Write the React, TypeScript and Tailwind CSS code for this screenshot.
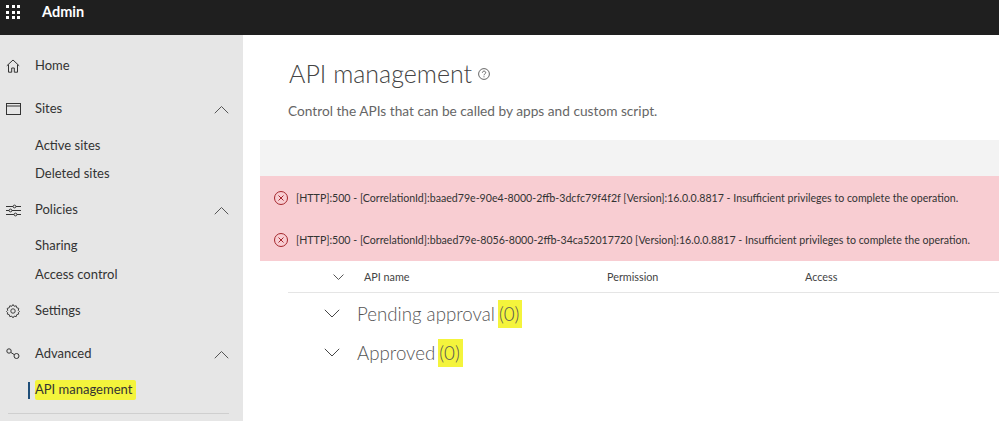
import React from "react";

const Chev = ({ up, size = 16, cls = "" }: { up?: boolean; size?: number; cls?: string }) => (
  <svg width={size} height={size * 0.6} viewBox="0 0 20 12" fill="none" stroke="currentColor" strokeWidth={20 / size} className={cls}>
    {up ? <path d="M1 11 10 2l9 9" /> : <path d="M1 1l9 9 9-9" />}
  </svg>
);

const stroke = { fill: "none", stroke: "currentColor", strokeWidth: 1 };

const HomeIcon = () => (
  <svg width="14" height="14" viewBox="0 0 14 14" {...stroke}>
    <path d="M.8 6.8 7 1l6.2 5.8M2.5 5.6v7.6h3.2V9h2.6v4.2h3.2V5.6" />
  </svg>
);
const SitesIcon = () => (
  <svg width="15" height="13" viewBox="0 0 15 13" {...stroke}>
    <rect x=".5" y=".5" width="14" height="11" />
    <path d="M.5 3h14" />
  </svg>
);
const PoliciesIcon = () => (
  <svg width="15" height="13" viewBox="0 0 15 13" {...stroke}>
    <path d="M0 2.5h7M10 2.5h5M0 6.5h3M6 6.5h9M0 10.5h8M11 10.5h4" />
    <circle cx="8.5" cy="2.5" r="1.4" />
    <circle cx="4.5" cy="6.5" r="1.4" />
    <circle cx="9.5" cy="10.5" r="1.4" />
  </svg>
);
const GearIcon = () => (
  <svg width="14" height="14" viewBox="0 0 24 24" fill="none" stroke="currentColor" strokeWidth="1.6">
    <path d="M12 1.5l2 3 3.5-.8 1 3.4 3.4 1-.8 3.5 2 2-2 2 .8 2.2-3.4 1-1 3.4-3.5-.8-2 3-2-3-3.5.8-1-3.4-3.4-1 .8-2.2-2-2 2-2-.8-3.5 3.4-1 1-3.4 3.5.8z" transform="translate(0 -.6)" />
    <circle cx="12" cy="12" r="3.8" />
  </svg>
);
const AdvancedIcon = () => (
  <svg width="14" height="12" viewBox="0 0 14 12" {...stroke}>
    <circle cx="3" cy="3" r="2.2" />
    <circle cx="10.5" cy="8" r="2.5" />
    <path d="M5 4.5 8 6.5" />
  </svg>
);
const ErrorIcon = () => (
  <svg width="14" height="14" viewBox="0 0 14 14" fill="none" stroke="#a4262c" strokeWidth="1" className="shrink-0">
    <circle cx="7" cy="7" r="6.5" />
    <path d="M4.5 4.5l5 5M9.5 4.5l-5 5" />
  </svg>
);

const Row = ({ icon, label, chevron, cls = "" }: { icon?: React.ReactNode; label: string; chevron?: boolean; cls?: string }) => (
  <div className={`flex h-7 items-center text-[13px] text-[#333333] ${cls}`}>
    <div className="flex w-[35px] justify-start pl-[6px]">{icon}</div>
    <span>{label}</span>
    {chevron && <Chev up size={15} cls="ml-auto mr-[14px] text-[#555555]" />}
  </div>
);

const ErrorLine = ({ id }: { id: string }) => (
  <div className="flex h-4 items-center gap-[8px] whitespace-nowrap text-[10.62px] leading-4 text-[#333333]">
    <ErrorIcon />
    <span>{`[HTTP]:500 - [CorrelationId]:${id} [Version]:16.0.0.8817 - Insufficient privileges to complete the operation.`}</span>
  </div>
);

const Group = ({ label, cls = "" }: { label: string; cls?: string }) => (
  <div className={`flex h-7 items-center pl-[81px] text-[18.7px] font-light text-[#555555] ${cls}`}>
    <Chev size={16} cls="text-[#444444]" />
    <span className="ml-[17px]">{label}</span>
    <span className="ml-[3px] bg-[#f4f43c] pl-px pr-[3px]">(0)</span>
  </div>
);

export default function App() {
  return (
    <div className="flex h-[421px] w-[999px] flex-col overflow-hidden bg-white font-['Lato','Open_Sans',sans-serif]">
      <header className="flex h-[35px] shrink-0 items-center bg-[#1f1f1f] pb-[11px] text-white">
        <div className="ml-[6px] grid grid-cols-3 gap-[2.5px]">
          {Array.from({ length: 9 }).map((_, i) => (
            <span key={i} className="h-[3px] w-[3px] bg-white" />
          ))}
        </div>
        <span className="ml-[22px] text-[14.5px] font-bold">Admin</span>
      </header>
      <div className="flex min-h-0 flex-1">
        <aside className="flex w-[243px] shrink-0 flex-col bg-[#e6e6e6] pt-[17px]">
          <Row icon={<HomeIcon />} label="Home" />
          <Row icon={<SitesIcon />} label="Sites" chevron cls="mt-[15px]" />
          <Row label="Active sites" cls="mt-[9px]" />
          <Row label="Deleted sites" />
          <Row icon={<PoliciesIcon />} label="Policies" chevron cls="mt-[8px]" />
          <Row label="Sharing" cls="mt-[8px]" />
          <Row label="Access control" cls="mt-px" />
          <Row icon={<GearIcon />} label="Settings" cls="mt-[8px]" />
          <Row icon={<AdvancedIcon />} label="Advanced" chevron cls="mt-[15px]" />
          <div className="mt-[8px] flex h-7 items-center pl-[28px] text-[13px] text-[#333333]">
            <span className="h-[17px] w-[2px] bg-[#1f4e79]" />
            <span className="ml-[5px] rounded-[2px] bg-[#f4f43c] pr-[4px]">API management</span>
          </div>
          <div className="ml-[8px] mr-[14px] mt-[9px] border-t border-[#cfcfcf]" />
        </aside>
        <main className="min-w-0 flex-1 pt-[20px]">
          <div className="ml-[46px] flex h-[38px] items-center">
            <h1 className="text-[25px] font-light text-[#444444]">API management</h1>
            <svg width="12" height="12" viewBox="0 0 12 12" fill="none" stroke="#555555" strokeWidth=".9" className="ml-[6px]">
              <circle cx="6" cy="6" r="5.4" />
              <path d="M4.4 4.7c0-2.1 3.3-2.1 3.3 0 0 1.2-1.7 1.2-1.7 2.6M6 8.3v1" />
            </svg>
          </div>
          <p className="ml-[45px] mt-[8px] h-5 text-[13.7px] leading-5 text-[#666666]">Control the APIs that can be called by apps and custom script.</p>
          <div className="ml-[17px] mt-[19px] h-9 bg-[#f3f3f3]" />
          <div className="ml-[17px] flex h-[85px] flex-col justify-center gap-[26px] bg-[#f8cdd2] pl-[14px]">
            <ErrorLine id="baaed79e-90e4-8000-2ffb-3dcfc79f4f2f" />
            <ErrorLine id="bbaed79e-8056-8000-2ffb-34ca52017720" />
          </div>
          <div className="ml-[45px] flex h-[32px] items-center border-b border-[#e5e5e5] pt-[2px] text-[10.8px] text-[#444444]">
            <Chev size={11} cls="ml-[45px] text-[#555555]" />
            <span className="ml-[20px] w-[243px]">API name</span>
            <span className="w-[198px]">Permission</span>
            <span>Access</span>
          </div>
          <Group label="Pending approval" cls="mt-[7px]" />
          <Group label="Approved" cls="mt-[11px]" />
        </main>
      </div>
    </div>
  );
}
